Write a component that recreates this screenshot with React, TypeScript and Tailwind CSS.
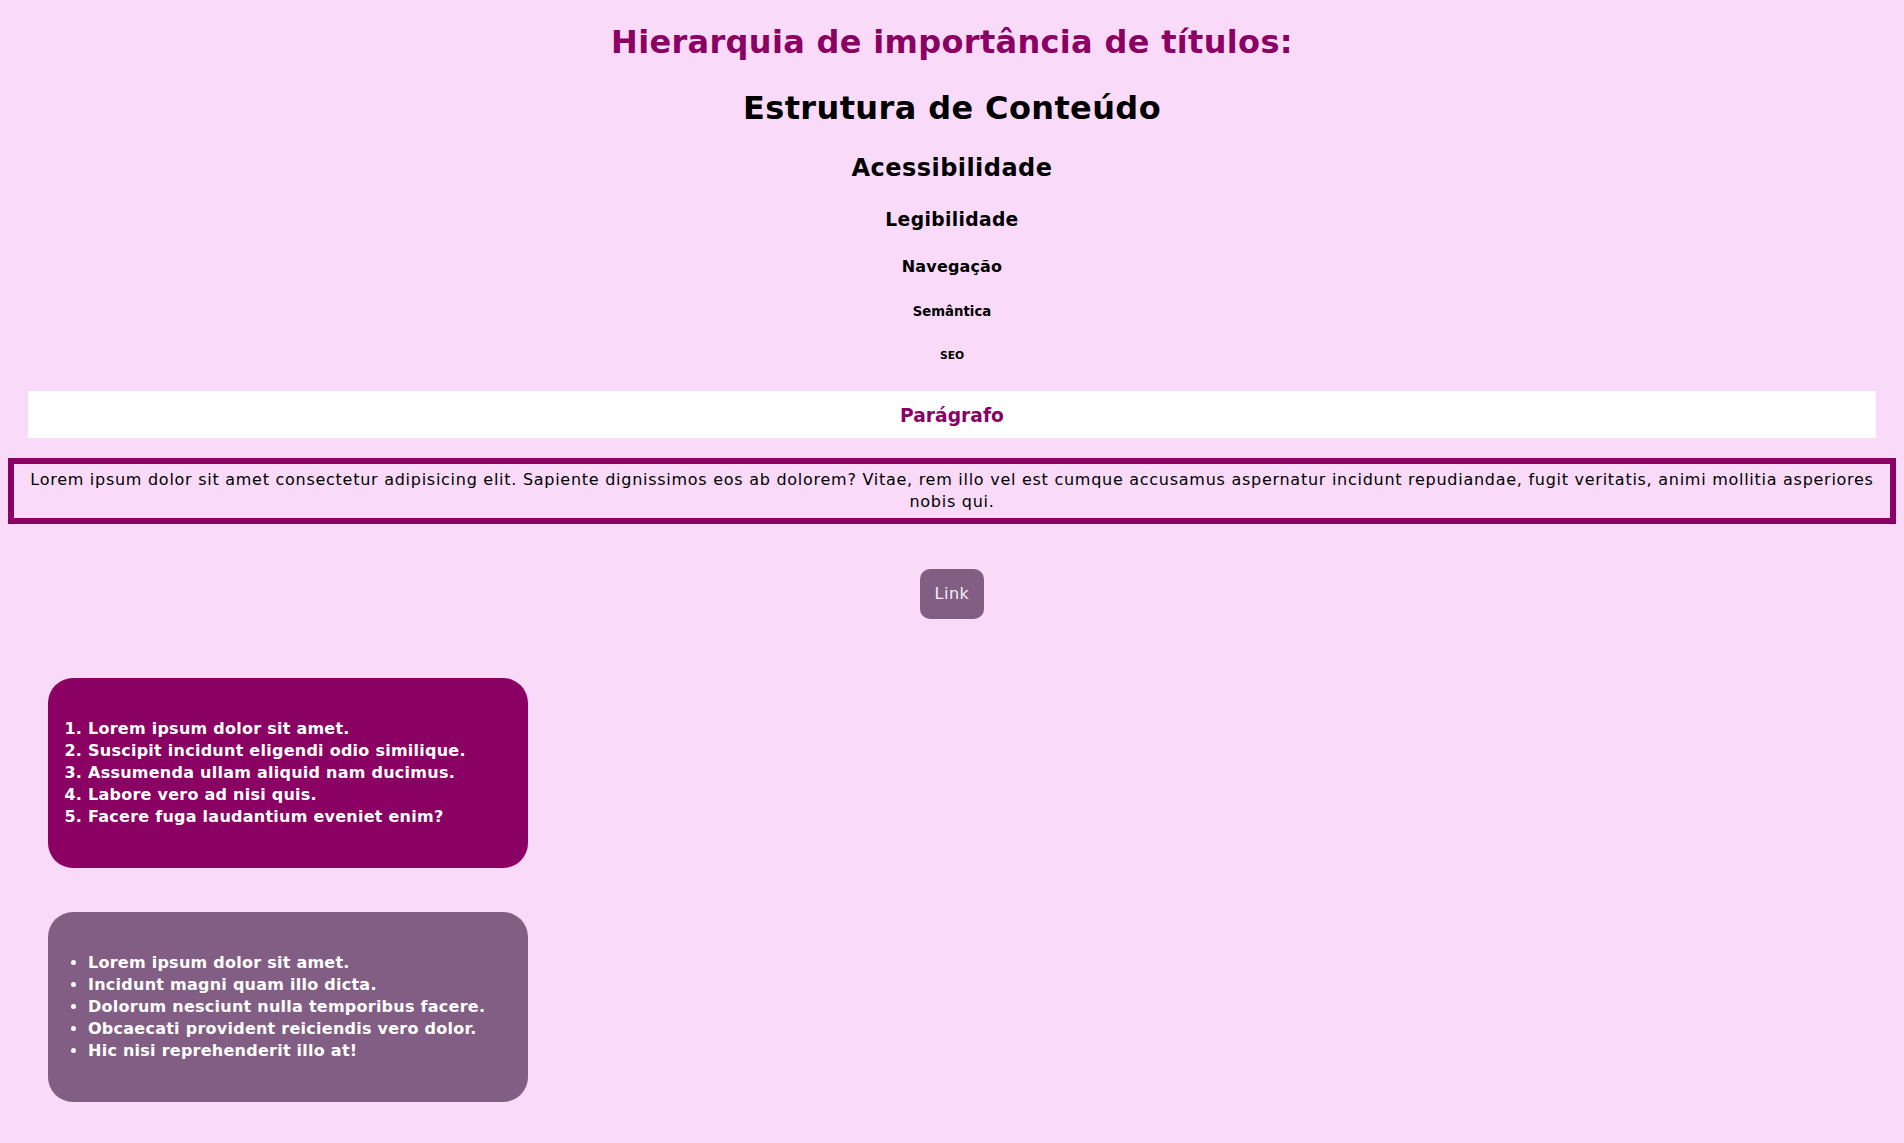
import React from "react";

const orderedItems = [
  "Lorem ipsum dolor sit amet.",
  "Suscipit incidunt eligendi odio similique.",
  "Assumenda ullam aliquid nam ducimus.",
  "Labore vero ad nisi quis.",
  "Facere fuga laudantium eveniet enim?",
];

const bulletItems = [
  "Lorem ipsum dolor sit amet.",
  "Incidunt magni quam illo dicta.",
  "Dolorum nesciunt nulla temporibus facere.",
  "Obcaecati provident reiciendis vero dolor.",
  "Hic nisi reprehenderit illo at!",
];

const App: React.FC = () => {
  return (
    <div className="min-h-screen bg-[#f9dbf9] px-2 pb-10 pt-px font-['DejaVu_Sans',sans-serif] text-black">
      <h1 className="mt-[17px] text-center text-[32px] font-bold leading-[48px] tracking-[0.32px] text-[#8b0063]">
        Hierarquia de importância de títulos:
      </h1>
      <h1 className="mt-[18px] text-center text-[32px] font-bold leading-[48px] tracking-[0.38px]">
        Estrutura de Conteúdo
      </h1>
      <h2 className="mt-[18px] text-center text-[24px] font-bold leading-[36px] tracking-[0.45px]">
        Acessibilidade
      </h2>
      <h3 className="mt-[20px] text-center text-[18.72px] font-bold leading-[28px] tracking-[0.35px]">
        Legibilidade
      </h3>
      <h4 className="mt-[21px] text-center text-[16px] font-bold leading-[24px] tracking-[0.15px]">
        Navegação
      </h4>
      <h5 className="mt-[23px] text-center text-[13.28px] font-bold leading-[20px]">
        Semântica
      </h5>
      <h6 className="mt-[25.5px] text-center text-[10.72px] font-bold leading-[16px]">
        SEO
      </h6>

      <div className="mx-5 mt-[27px] bg-white pb-[8px] pt-[11px]">
        <h3 className="text-center text-[18.72px] font-bold leading-[28px] text-[#8b0063]">
          Parágrafo
        </h3>
      </div>

      <p className="mt-[20px] border-[6px] border-[#8b0063] p-[5px] text-center text-[16px] leading-[22px] tracking-[0.73px]">
        Lorem ipsum dolor sit amet consectetur adipisicing elit. Sapiente
        dignissimos eos ab dolorem? Vitae, rem illo vel est cumque accusamus
        aspernatur incidunt repudiandae, fugit veritatis, animi mollitia
        asperiores nobis qui.
      </p>

      <div className="mt-[45px] flex justify-center">
        <a
          href="#"
          className="rounded-[10px] bg-[#825e84] px-[15px] py-4 text-[16px] leading-[18px] tracking-[0.5px] text-[#f8eef8]"
        >
          Link
        </a>
      </div>

      {/* listas */}
      <ol className="ml-10 mt-[59px] w-[480px] list-decimal rounded-[25px] bg-[#8b0063] p-10 text-[16px] font-bold leading-[22px] tracking-[0.25px] text-white">
        {orderedItems.map((item) => (
          <li key={item}>{item}</li>
        ))}
      </ol>

      <ul className="ml-10 mt-[44px] w-[480px] list-disc rounded-[25px] bg-[#825e84] p-10 text-[16px] font-bold leading-[22px] tracking-[0.25px] text-white">
        {bulletItems.map((item) => (
          <li key={item}>{item}</li>
        ))}
      </ul>
    </div>
  );
};

export default App;
